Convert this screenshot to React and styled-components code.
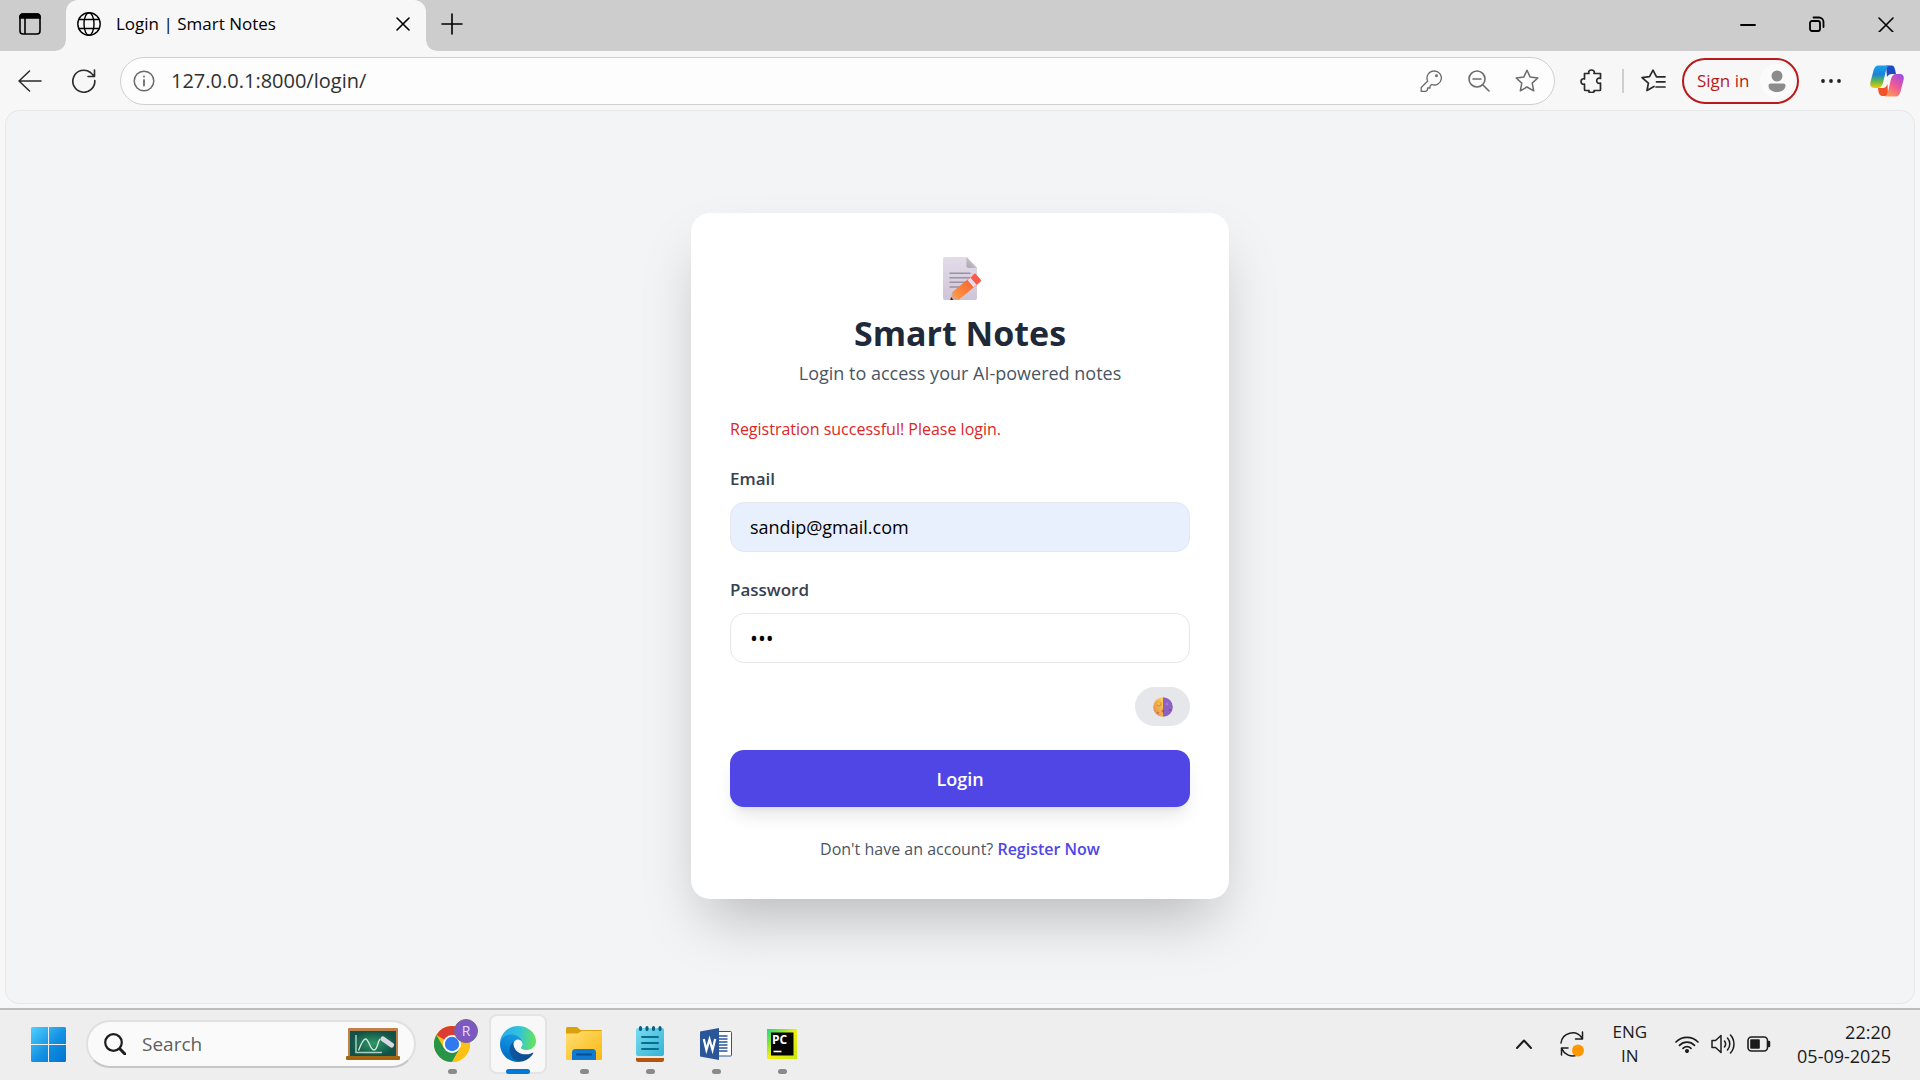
import React from "react";
import styled, { createGlobalStyle } from "styled-components";

const Global = createGlobalStyle`
  *, *::before, *::after { box-sizing: border-box; }
  body { margin: 0; background: #f7f7f7; }
  body, button, input { font-family: "Open Sans", "Noto Sans", sans-serif; }
  button { border: 0; padding: 0; background: none; color: inherit; cursor: pointer; }
  h1, p { margin: 0; }
  svg { display: block; flex: none; }
`;

const Screen = styled.div`
  display: flex;
  flex-direction: column;
  min-height: 100vh;
  background: #f7f7f7;
`;

/* Title bar */
const TabStrip = styled.header`
  display: flex;
  align-items: stretch;
  height: 51px;
  background: #cdcdcd;
  color: #000;
`;

const StripButton = styled.button`
  display: grid;
  place-items: center;
  width: ${(p) => p.$width}px;
  height: 48px;
`;

const Tab = styled.div`
  position: relative;
  display: flex;
  align-items: center;
  width: 360px;
  margin: 0 3px 0 6px;
  padding: 0 11px 3px 11px;
  gap: 15px;
  border-radius: 12px 12px 0 0;
  background: #f7f7f7;
  &::before, &::after {
    content: "";
    position: absolute;
    bottom: 0;
    width: 10px;
    height: 10px;
  }
  &::before {
    right: 100%;
    background: radial-gradient(circle at 0 0, #cdcdcd 9px, #f7f7f7 10px);
  }
  &::after {
    left: 100%;
    background: radial-gradient(circle at 100% 0, #cdcdcd 9px, #f7f7f7 10px);
  }
`;

const TabTitle = styled.span`
  flex: 1;
  font-size: 17px;
  line-height: 24px;
  white-space: nowrap;
`;

const WindowControls = styled.div`
  display: flex;
  margin-left: auto;
`;

/* Toolbar */
const Toolbar = styled.nav`
  display: flex;
  align-items: center;
  gap: 6px;
  padding: 6px 9px 5px 6px;
  color: #2a2a2a;
`;

const ToolButton = styled.button`
  display: grid;
  place-items: center;
  flex: none;
  width: ${(p) => p.$width || 48}px;
  height: 44px;
`;

const AddressBar = styled.label`
  display: flex;
  flex: 1;
  align-items: center;
  min-width: 0;
  height: 48px;
  margin: 0 7px 0 6px;
  padding: 0 3px 0 12px;
  border: 1px solid #cfcfcf;
  border-radius: 24px;
  background: #fdfdfd;
  color: #6b6b6b;
`;

const AddressInput = styled.input`
  flex: 1;
  min-width: 0;
  margin-left: 16px;
  padding: 0;
  border: 0;
  outline: 0;
  background: none;
  color: #303030;
  font-size: 20px;
  line-height: 28px;
`;

const Divider = styled.span`
  width: 2px;
  height: 24px;
  background: #cfcfcf;
`;

const SignIn = styled.button`
  display: flex;
  flex: none;
  align-items: center;
  justify-content: space-between;
  width: 117px;
  height: 46px;
  padding: 0 3px 0 13px;
  border: 2px solid #b8191b;
  border-radius: 23px;
  color: #b8191b;
  font-size: 17px;
  line-height: 24px;
  white-space: nowrap;
`;

/* Page */
const Page = styled.main`
  display: flex;
  flex: 1;
  align-items: center;
  justify-content: center;
  margin: 0 5px 4px;
  padding-bottom: 2px;
  overflow: hidden;
  border: 1px solid #e6e7e8;
  border-radius: 14px;
  background: #f3f4f6;
`;

const Card = styled.section`
  width: 100%;
  max-width: 538px;
  padding: 44px 39px 38px;
  border-radius: 19px;
  background: #fff;
  box-shadow: 0 30px 60px -14px rgba(0, 0, 0, 0.25);
`;

const CardHeader = styled.div`
  display: flex;
  flex-direction: column;
  align-items: center;
`;

const Title = styled.h1`
  margin: 10px 0 4px;
  color: #1f2937;
  font-size: 34px;
  font-weight: 700;
  line-height: 44px;
`;

const Subtitle = styled.p`
  color: #4b5563;
  font-size: 18px;
  line-height: 28px;
`;

const Message = styled.p`
  margin: 30px 0 24px;
  color: #dc2626;
  font-size: 16px;
  line-height: 24px;
`;

const Form = styled.form`
  display: flex;
  flex-direction: column;
  gap: 24px;
`;

const Field = styled.div`
  display: flex;
  flex-direction: column;
  gap: 9px;
`;

const FieldLabel = styled.label`
  color: #374151;
  font-size: 17px;
  font-weight: 600;
  line-height: 28px;
`;

const TextInput = styled.input`
  width: 100%;
  height: 50px;
  padding: 0 19px;
  border: 1px solid #e5e7eb;
  border-radius: 14px;
  outline: 0;
  background: ${(p) => (p.$filled ? "#e8f0fe" : "#fff")};
  color: #000;
  font-size: ${(p) => (p.type === "password" ? 21 : 18)}px;
`;

const ThemeToggle = styled.button`
  display: grid;
  place-items: center;
  align-self: flex-end;
  width: 55px;
  height: 39px;
  border-radius: 20px;
  background: #e5e7eb;
`;

const LoginButton = styled.button`
  height: 57px;
  border-radius: 14px;
  background: #4f46e5;
  box-shadow: 0 12px 18px -4px rgba(0, 0, 0, 0.1), 0 5px 7px -5px rgba(0, 0, 0, 0.1);
  color: #fff;
  font-size: 18px;
  font-weight: 600;
`;

const Footer = styled.p`
  margin-top: 30px;
  color: #4b5563;
  font-size: 16px;
  line-height: 24px;
  text-align: center;
  a {
    color: #4f46e5;
    font-weight: 600;
    text-decoration: none;
  }
`;

/* Taskbar */
const Taskbar = styled.footer`
  display: flex;
  align-items: center;
  height: 72px;
  padding: 0 29px 2px 23px;
  border-top: 2px solid #bcbcbc;
  background: #eeeeee;
  color: #1c1c1c;
`;

const StartButton = styled.button`
  display: grid;
  place-items: center;
  width: 50px;
  height: 50px;
`;

const SearchBox = styled.label`
  display: flex;
  align-items: center;
  gap: 16px;
  width: 330px;
  height: 48px;
  margin: 0 7px 0 13px;
  padding: 0 14px 0 16px;
  border: 2px solid #e0e0e0;
  border-bottom-color: #c6c6c6;
  border-radius: 24px;
  background: #fafafa;
`;

const SearchInput = styled.input`
  flex: 1;
  min-width: 0;
  padding: 0;
  border: 0;
  outline: 0;
  background: none;
  font-size: 19px;
  line-height: 28px;
  &::placeholder { color: #5f5f5f; opacity: 1; }
`;

const Apps = styled.div`
  display: flex;
  gap: 8px;
`;

const AppButton = styled.button`
  position: relative;
  display: grid;
  place-items: center;
  width: 58px;
  height: 60px;
  border: 2px solid ${(p) => (p.$active ? "#e4e4e4" : "transparent")};
  border-radius: 8px;
  background: ${(p) => (p.$active ? "#f8f8f8" : "transparent")};
  &::after {
    content: "";
    position: absolute;
    bottom: -2px;
    width: ${(p) => (p.$active ? 24 : 9)}px;
    height: 5px;
    border-radius: 3px;
    background: ${(p) => (p.$active ? "#0078d7" : "#8a8a8a")};
  }
`;

const Badge = styled.span`
  position: absolute;
  top: 3px;
  right: 1px;
  width: 24px;
  height: 24px;
  border: 1px solid #6d6d86;
  border-radius: 50%;
  background: #7e57c2;
  color: #e8e0f4;
  font-size: 14px;
  line-height: 22px;
  text-align: center;
`;

const Tray = styled.div`
  display: flex;
  align-items: center;
  margin-left: auto;
`;

const TrayButton = styled.button`
  display: flex;
  align-items: center;
  justify-content: center;
  gap: 12px;
  height: 50px;
  padding: 0 ${(p) => p.$pad}px;
`;

const TrayText = styled.span`
  display: flex;
  flex-direction: column;
  align-items: ${(p) => p.$align};
  font-size: ${(p) => p.$size}px;
  line-height: 24px;
  white-space: nowrap;
`;

const TrayStatus = styled(TrayButton)`
  margin-right: 12px;
`;

function Line({ w = 24, h = w, box, sw = 1.5, children }) {
  return (
    <svg width={w} height={h} viewBox={box || `0 0 ${w} ${h}`} fill="none" stroke="currentColor"
      strokeWidth={sw} strokeLinecap="round" strokeLinejoin="round" aria-hidden="true">
      {children}
    </svg>
  );
}

const STAR = "M12 1.2l3.2 6.9 7.6.9-5.6 5.1 1.5 7.7L12 18l-6.7 3.8 1.5-7.7L1.2 9l7.6-.9z";

function NoteIcon() {
  return (
    <svg width="44" height="44" viewBox="0 0 44 44" aria-hidden="true">
      <defs>
        <linearGradient id="paper" x1="0" y1="0" x2="0" y2="1">
          <stop offset="0" stopColor="#e3dce8" /><stop offset="1" stopColor="#cfc4d8" />
        </linearGradient>
        <linearGradient id="fold" x1="0" y1="1" x2="1" y2="0">
          <stop offset="0" stopColor="#aaa3ae" /><stop offset="1" stopColor="#dcd5df" />
        </linearGradient>
        <linearGradient id="pencil" x1="0" y1="1" x2="1" y2="0">
          <stop offset="0" stopColor="#ffa044" /><stop offset="1" stopColor="#f3582f" />
        </linearGradient>
      </defs>
      <path d="M7 0h21.500l10.500 11v30a2 2 0 0 1-2 2H7a2 2 0 0 1-2-2V2a2 2 0 0 1 2-2z" fill="url(#paper)" />
      <path d="M28.500 0v9a2 2 0 0 0 2 2H39z" fill="url(#fold)" />
      <path d="M12 16.200h20M12 20.800h20M12 25.300h16M12 29.900h10" stroke="#9a91a1" strokeWidth="1.500" strokeLinecap="round" />
      <path d="M14.500 35L32 20.500l6.500 7.500L20.500 43H16z" fill="url(#pencil)" />
      <path d="M14.500 35l6 8h-8z" fill="#e3a183" />
      <path d="M13.200 40l2 3h-3z" fill="#3b2532" />
      <path d="M29.500 23l4-3.300 6 7.200-4 3.400z" fill="#e6dbeb" />
      <path d="M32.500 20.700l3.300-3.500a1.500 1.500 0 0 1 2.200 0l4.600 5.400a1.500 1.500 0 0 1-.2 2.200l-3.600 3.200z" fill="#fb5a4b" />
    </svg>
  );
}

function MoonIcon() {
  return (
    <svg width="20" height="20" viewBox="0 0 20 20" aria-hidden="true">
      <defs>
        <linearGradient id="lit" x1="1" y1="0" x2="0" y2="1">
          <stop offset="0" stopColor="#ffd05a" /><stop offset=".65" stopColor="#eda24b" /><stop offset="1" stopColor="#c77561" />
        </linearGradient>
      </defs>
      <path d="M10 .2a9.800 9.800 0 0 0 0 19.600z" fill="url(#lit)" />
      <path d="M10 .2a9.800 9.800 0 0 1 0 19.600z" fill="#8d60c2" />
      <circle cx="6" cy="7" r="2.500" fill="#d6923f" /><circle cx="5.800" cy="6.500" r="1.700" fill="#f5ba55" />
      <circle cx="5" cy="15.800" r="1.100" fill="#c87850" /><path d="M8.500 14a1.500 1.500 0 0 1 1.500-1.500v3A1.500 1.500 0 0 1 8.500 14z" fill="#bd7940" />
      <circle cx="14" cy="7" r="1.500" fill="#a37bd2" /><circle cx="17" cy="13" r="1" fill="#6f48a4" /><path d="M10 12.500a1.700 1.700 0 0 1 0 3z" fill="#6f48a4" />
    </svg>
  );
}

function CopilotIcon() {
  return (
    <svg width="34" height="32" viewBox="0 0 34 32" aria-hidden="true">
      <defs>
        <linearGradient id="cpA" x1="0" y1="0" x2="0" y2="1">
          <stop offset="0" stopColor="#1ba0ea" /><stop offset=".4" stopColor="#1b83d8" /><stop offset=".7" stopColor="#63b946" /><stop offset="1" stopColor="#f6c90d" />
        </linearGradient>
        <linearGradient id="cpB" x1=".8" y1="0" x2=".2" y2="1">
          <stop offset="0" stopColor="#a24be8" /><stop offset=".5" stopColor="#ee5a94" /><stop offset="1" stopColor="#ff9b51" />
        </linearGradient>
      </defs>
      <path d="M16 .5h5c3.200 0 3.400 1.800 4.100 4.300L26 9h-4c-2.500 0-4 1-5 3z" fill="#1d4bc4" />
      <path d="M8 23h5c2 0 3.500-1.500 4.500-4l.5 12h-5c-3 0-4-1.800-4.400-4z" fill="#f1532b" />
      <path d="M8.500.500h11c-2 .8-2.800 2.500-3.400 4.500L13 18c-.8 3-2.500 5-5 5H4c-3.500 0-4.400-3-3.500-6l3-11.500C4.400 2.500 5.500.500 8.500.500z" fill="url(#cpA)" />
      <path d="M25.500 31.500h-11c2-.8 2.800-2.500 3.400-4.500L21 14c.8-3 2.500-5 5-5h4c3.500 0 4.400 3 3.500 6l-3 11.500c-.9 3-2 5-5 5z" fill="url(#cpB)" />
    </svg>
  );
}

function WindowsIcon() {
  return (
    <svg width="35" height="35" viewBox="0 0 35 35" aria-hidden="true">
      <defs>
        <linearGradient id="win" gradientUnits="userSpaceOnUse" x1="0" y1="0" x2="35" y2="35">
          <stop offset="0" stopColor="#4fd0ff" /><stop offset=".55" stopColor="#1390e2" /><stop offset="1" stopColor="#0073d1" />
        </linearGradient>
      </defs>
      <path fill="url(#win)" d="M1.500 0H17v17H0V1.500A1.500 1.500 0 0 1 1.500 0zM18 0h15.500A1.500 1.500 0 0 1 35 1.500V17H18zM0 18h17v17H1.500A1.500 1.500 0 0 1 0 33.500zM18 18h17v15.500a1.500 1.500 0 0 1-1.500 1.500H18z" />
    </svg>
  );
}

function BoardIcon() {
  return (
    <svg width="54" height="32" viewBox="0 0 54 32" aria-hidden="true">
      <defs>
        <radialGradient id="board"><stop offset="0" stopColor="#2f9a66" /><stop offset="1" stopColor="#125148" /></radialGradient>
      </defs>
      <rect x="2" y="0" width="50" height="29" rx="1" fill="#c0804c" />
      <rect x="4" y="3" width="46" height="25" fill="url(#board)" />
      <path d="M10 7v17.500h26" fill="none" stroke="#a9d0bc" strokeWidth="1.500" />
      <path d="M12.500 22.500C15 16 17 11 19.500 11c3.500 0 4.500 11 8.500 11 3.500 0 3.500-8 6-11" fill="none" stroke="#d6e9df" strokeWidth="1.300" />
      <path d="M37 11l8.500 6" stroke="#d9d7e4" strokeWidth="5" strokeLinecap="round" />
      <rect x="0" y="28" width="54" height="4" rx="1" fill="#a1660f" />
    </svg>
  );
}

function ChromeIcon() {
  return (
    <svg width="36" height="36" viewBox="0 0 36 36" aria-hidden="true">
      <circle cx="18" cy="18" r="18" fill="#fbc116" />
      <path d="M18 18L2.400 9A18 18 0 0 1 33.600 9H18z" fill="#dd3c33" />
      <path d="M2.400 9A18 18 0 0 0 18 36l7.800-13.500L18 18l-7.800 4.500z" fill="#279447" />
      <path d="M18 36a18 18 0 0 0 15.600-27H18l7.800 13.500z" fill="#fbc116" />
      <circle cx="18" cy="18" r="9" fill="#fff" /><circle cx="18" cy="18" r="7.200" fill="#3079ee" />
    </svg>
  );
}

function EdgeIcon() {
  return (
    <svg width="36" height="36" viewBox="0 0 256 256" aria-hidden="true">
      <defs>
        <linearGradient id="eA" x1="0" y1="0" x2="1" y2="0"><stop offset="0" stopColor="#0c59a4" /><stop offset="1" stopColor="#114a8b" /></linearGradient>
        <linearGradient id="eB" x1=".6" y1="0" x2=".3" y2="1"><stop offset="0" stopColor="#1b9de2" /><stop offset=".5" stopColor="#0a84d8" /><stop offset="1" stopColor="#0067b8" /></linearGradient>
        <linearGradient id="eC" x1="0" y1=".3" x2="1" y2=".4"><stop offset="0" stopColor="#2aa9e8" /><stop offset=".5" stopColor="#2fc2df" /><stop offset="1" stopColor="#66e35c" /></linearGradient>
      </defs>
      <path d="M231 190.500c-3.400 1.800-6.900 3.400-10.500 4.700a102 102 0 0 1-35.900 6.500c-47.300 0-88.500-32.500-88.500-74.300.1-11.400 6.400-21.900 16.400-27.300-42.800 1.800-53.800 46.400-53.800 72.500 0 73.900 68.100 81.400 82.800 81.400 7.900 0 19.800-2.300 27-4.600l1.300-.4a128 128 0 0 0 66.600-52.800c1.200-1.900.6-4.300-1.200-5.500-1.300-.8-2.900-.9-4.200-.2z" fill="url(#eA)" />
      <path d="M105.700 241.400a79 79 0 0 1-22.700-21.300 80.700 80.700 0 0 1 29.500-120c3.200-1.500 8.500-4.100 15.600-4a32.400 32.400 0 0 1 25.700 13 31.900 31.900 0 0 1 6.300 18.700c0-.2 24.500-79.600-80-79.600-43.900 0-80 41.700-80 78.200-.2 19.300 4 38.500 12.100 56a128 128 0 0 0 156.400 67 75.500 75.500 0 0 1-62.800-8z" fill="url(#eB)" />
      <path d="M152.300 148.900c-.9 1-3.400 2.500-3.400 5.600 0 2.600 1.700 5.200 4.800 7.300 14.300 10 41.400 8.600 41.500 8.600 10.700 0 21.100-2.900 30.300-8.300A61.400 61.400 0 0 0 256 109c.3-22.400-8-37.300-11.300-43.900C223.500 23.900 177.700 0 128 0 58 0 1 56.200 0 126.200c.5-36.500 36.800-66 80-66 3.500 0 23.500.3 42 10 16.300 8.600 24.900 18.900 30.800 29.200 6.200 10.700 7.300 24.100 7.300 29.500s-2.700 13.300-7.800 20z" fill="url(#eC)" />
    </svg>
  );
}

function FolderIcon() {
  return (
    <svg width="36" height="34" viewBox="0 0 36 34" aria-hidden="true">
      <defs>
        <linearGradient id="fd" x1="0" y1="0" x2="1" y2="1"><stop offset="0" stopColor="#ffdf74" /><stop offset="1" stopColor="#fab80f" /></linearGradient>
      </defs>
      <path d="M1.500 0H11l3.500 3H35a1 1 0 0 1 1 1v10H0V1.500A1.500 1.500 0 0 1 1.500 0z" fill="#dba10b" />
      <path d="M0 6.500h11.500L16 4h20v27.500a1.500 1.500 0 0 1-1.500 1.500h-33A1.500 1.500 0 0 1 0 31.500z" fill="url(#fd)" />
      <path d="M6 33v-7.500A3.500 3.500 0 0 1 9.500 22h17a3.500 3.500 0 0 1 3.500 3.500V33z" fill="#1279d0" />
      <path d="M11 27.500h14" stroke="#0b4d91" strokeWidth="2" strokeLinecap="round" />
    </svg>
  );
}

function NotepadIcon() {
  return (
    <svg width="28" height="36" viewBox="0 0 28 36" aria-hidden="true">
      <defs>
        <linearGradient id="np" x1="0" y1="0" x2="1" y2="1"><stop offset="0" stopColor="#78dcf2" /><stop offset="1" stopColor="#35b3d2" /></linearGradient>
      </defs>
      <rect x="0" y="24" width="28" height="12" rx="2" fill="#b4550f" />
      <rect x="0" y="28" width="28" height="4" fill="#f0e8e3" />
      <rect x="0" y="2" width="28" height="28" rx="2" fill="url(#np)" />
      <path d="M4.500 1.500v2M11 1.500v2M17.500 1.500v2M24 1.500v2" stroke="#0b5d7c" strokeWidth="3" strokeLinecap="round" />
      <path d="M6 11h16M6 17h16M6 23h16" stroke="#086c8d" strokeWidth="2" strokeLinecap="round" />
    </svg>
  );
}

function WordIcon() {
  return (
    <svg width="32" height="32" viewBox="0 0 32 32" aria-hidden="true">
      <rect x="16" y="3.500" width="15.500" height="24.500" rx="1" fill="#fff" stroke="#2a5699" />
      <path d="M19 8h8.500M19 11h8.500M19 14h8.500M19 17h8.500M19 20h8.500M19 23h8.500" stroke="#2a5699" strokeWidth="1.300" />
      <path d="M0 3.500L19 0v32L0 28.500z" fill="#2a5699" />
      <path d="M3.800 11l2.600 11L9.500 11.500 12.500 22l2.700-11" fill="none" stroke="#fff" strokeWidth="2.200" />
    </svg>
  );
}

function PyCharmIcon() {
  return (
    <svg width="30" height="30" viewBox="0 0 30 30" aria-hidden="true">
      <defs>
        <linearGradient id="pc" x1="0" y1="0" x2="1" y2="1"><stop offset="0" stopColor="#21d789" /><stop offset=".25" stopColor="#7be53c" /><stop offset=".5" stopColor="#f3ee12" /><stop offset="1" stopColor="#c9e80f" /></linearGradient>
      </defs>
      <rect width="30" height="30" fill="url(#pc)" /><rect x="4" y="3.500" width="22.500" height="23" fill="#050505" />
      <text x="5" y="15" fill="#fff" fontFamily="Open Sans, sans-serif" fontWeight="700" fontSize="12">PC</text>
      <path d="M6.500 22.500h8" stroke="#fff" strokeWidth="1.600" />
    </svg>
  );
}

export default function App() {
  return (
    <Screen>
      <Global />
      <TabStrip>
        <StripButton $width={60} aria-label="Tab actions">
          <svg width="22" height="22" viewBox="0 0 22 22" fill="none" stroke="#000" strokeWidth="1.600" aria-hidden="true">
            <rect x="1" y="1" width="20" height="20" rx="3" /><path d="M1 5V4a3 3 0 0 1 3-3h14a3 3 0 0 1 3 3v1z" fill="#000" /><path d="M6 5v16" />
          </svg>
        </StripButton>
        <Tab>
          <Line w={24} sw={1.4}>
            <circle cx="12" cy="12" r="11.200" /><ellipse cx="12" cy="12" rx="5" ry="11.200" /><path d="M2 7.500h20M2 16.500h20" />
          </Line>
          <TabTitle>Login | Smart Notes</TabTitle>
          <StripButton $width={24} aria-label="Close tab">
            <Line w={14} sw={1.6}><path d="M1 1l12 12M13 1L1 13" /></Line>
          </StripButton>
        </Tab>
        <StripButton $width={46} aria-label="New tab">
          <Line w={22} sw={1.6}><path d="M11 1v20M1 11h20" /></Line>
        </StripButton>
        <WindowControls>
          <StripButton $width={69} aria-label="Minimize"><Line w={16} sw={1.8}><path d="M1 9h14" /></Line></StripButton>
          <StripButton $width={69} aria-label="Restore">
            <Line w={16} sw={1.8}><rect x="1" y="5" width="10" height="10" rx="2" /><path d="M4.500 1.500H10A4.500 4.500 0 0 1 14.500 6v5" /></Line>
          </StripButton>
          <StripButton $width={69} aria-label="Close"><Line w={16} sw={1.6}><path d="M1 2l14 14M15 2L1 16" /></Line></StripButton>
        </WindowControls>
      </TabStrip>

      <Toolbar>
        <ToolButton aria-label="Back"><Line w={24}><path d="M23 12H1M11.500 2L1 12l10.500 10" /></Line></ToolButton>
        <ToolButton aria-label="Reload"><Line w={24} sw={1.6}><path d="M22.800 11.500A11 11 0 1 1 18.500 3.500L22 7M22.500 1v6.500H16" /></Line></ToolButton>
        <AddressBar>
          <Line w={22} box="0 0 22 22"><circle cx="11" cy="11" r="9.800" /><path d="M11 10v5.500M11 6.500v.2" strokeWidth="1.800" /></Line>
          <AddressInput aria-label="Address" defaultValue="127.0.0.1:8000/login/" />
          <ToolButton type="button" aria-label="Saved passwords">
            <Line w={22} sw={1.3}><path d="M14 1a7 7 0 1 1-2.200 13.500L10 16v2H7.500v2L5.500 21.500H1.200V17.500l6.500-6.500A7 7 0 0 1 14 1z" /><circle cx="16.500" cy="5.700" r=".8" fill="currentColor" /></Line>
          </ToolButton>
          <ToolButton type="button" aria-label="Zoom"><Line w={22} sw={1.6}><circle cx="9" cy="9" r="8" /><path d="M15 15l6 6M5 9h8" /></Line></ToolButton>
          <ToolButton type="button" aria-label="Add to favorites"><Line w={24}><path d={STAR} /></Line></ToolButton>
        </AddressBar>
        <ToolButton aria-label="Extensions">
          <Line w={24} sw={1.7}><path d="M4.500 4.500H9C8 2.500 9.500 1 11.500 1S15 2.500 14 4.500h6.500V9.500c-2-.8-3.800.2-3.800 2.300s1.800 3.100 3.800 2.300v6.400a1 1 0 0 1-1 1H14c.8 1.200-.5 2-2.500 2S8 22.700 9 21.500H5.500a1 1 0 0 1-1-1V15C2.500 15.800 1 14.500 1 12.500S2.500 9.200 4.500 10z" /></Line>
        </ToolButton>
        <Divider />
        <ToolButton $width={46} aria-label="Favorites">
          <Line w={25} h={24} sw={1.7}><path d="M13 17.500l-7 4 1.400-7.300L1 8.600l7.500-1L12 1.200l3.500 6.600H24M15.500 12.800H24M15 18h9" /></Line>
        </ToolButton>
        <SignIn>
          Sign in
          <svg width="34" height="34" viewBox="0 0 34 34" aria-hidden="true">
            <circle cx="17" cy="17" r="17" fill="#fbfbfb" /><circle cx="17" cy="12" r="5.500" fill="#8c8c8c" />
            <path d="M10.500 19.500h13a2 2 0 0 1 2 2c0 4-3.500 6.500-8.500 6.500s-8.500-2.500-8.500-6.500a2 2 0 0 1 2-2z" fill="#8c8c8c" />
          </svg>
        </SignIn>
        <ToolButton $width={52} aria-label="Settings and more">
          <svg width="20" height="6" viewBox="0 0 20 6" fill="#222" aria-hidden="true"><circle cx="2" cy="3" r="1.900" /><circle cx="10" cy="3" r="1.900" /><circle cx="18" cy="3" r="1.900" /></svg>
        </ToolButton>
        <ToolButton aria-label="Copilot"><CopilotIcon /></ToolButton>
      </Toolbar>

      <Page>
        <Card>
          <CardHeader>
            <NoteIcon />
            <Title>Smart Notes</Title>
            <Subtitle>Login to access your AI-powered notes</Subtitle>
          </CardHeader>
          <Message role="status">Registration successful! Please login.</Message>
          <Form onSubmit={(e) => e.preventDefault()}>
            <Field>
              <FieldLabel htmlFor="email">Email</FieldLabel>
              <TextInput id="email" type="email" $filled defaultValue="sandip@gmail.com" />
            </Field>
            <Field>
              <FieldLabel htmlFor="password">Password</FieldLabel>
              <TextInput id="password" type="password" defaultValue="123" />
            </Field>
            <ThemeToggle type="button" aria-label="Toggle theme"><MoonIcon /></ThemeToggle>
            <LoginButton type="submit">Login</LoginButton>
          </Form>
          <Footer>Don't have an account? <a href="#register">Register Now</a></Footer>
        </Card>
      </Page>

      <Taskbar>
        <StartButton aria-label="Start"><WindowsIcon /></StartButton>
        <SearchBox>
          <Line w={22} sw={2.2}><circle cx="9.500" cy="9.500" r="8.300" /><path d="M16 16l5 5" strokeWidth="3" /></Line>
          <SearchInput aria-label="Search" placeholder="Search" />
          <BoardIcon />
        </SearchBox>
        <Apps>
          <AppButton aria-label="Chrome"><ChromeIcon /><Badge>R</Badge></AppButton>
          <AppButton $active aria-label="Edge"><EdgeIcon /></AppButton>
          <AppButton aria-label="File Explorer"><FolderIcon /></AppButton>
          <AppButton aria-label="Notepad"><NotepadIcon /></AppButton>
          <AppButton aria-label="Word"><WordIcon /></AppButton>
          <AppButton aria-label="PyCharm"><PyCharmIcon /></AppButton>
        </Apps>
        <Tray>
          <TrayButton $pad={14} aria-label="Show hidden icons"><Line w={16} h={10} sw={2}><path d="M1 9l7-7.500L15 9" /></Line></TrayButton>
          <TrayButton $pad={14} aria-label="Update">
            <Line w={24} h={26}>
              <path d="M1 12A11.500 11.500 0 0 1 22 7M22.500 1v7H15.500M17 24A11.500 11.500 0 0 1 2 18M1.500 24v-7H8" />
              <circle cx="18" cy="19.500" r="6" fill="#ff9800" stroke="none" />
            </Line>
          </TrayButton>
          <TrayButton $pad={14} aria-label="Keyboard language"><TrayText $align="center" $size={17}><span>ENG</span><span>IN</span></TrayText></TrayButton>
          <TrayStatus $pad={14} aria-label="Network, volume and battery">
            <Line w={24} h={18} sw={1.7}>
              <path d="M1 7a15.500 15.500 0 0 1 22 0M4.500 10.300a10.600 10.600 0 0 1 15 0M8 13.300a5.700 5.700 0 0 1 8 0" /><circle cx="12" cy="16" r="1.200" fill="currentColor" />
            </Line>
            <Line w={24} h={20}>
              <path d="M1 6.500h3.500L10 1.500v17l-5.500-5H1zM13.500 7a5 5 0 0 1 0 6M16.500 4a9 9 0 0 1 0 12M19.500 1a13.500 13.500 0 0 1 0 18" />
            </Line>
            <Line w={24} h={16} sw={1.6}>
              <rect x="1" y="1" width="19.500" height="14" rx="3.500" /><rect x="4" y="4" width="8" height="8" fill="currentColor" /><path d="M22 6v4" strokeWidth="2.500" />
            </Line>
          </TrayStatus>
          <TrayButton $pad={0} aria-label="Clock"><TrayText $align="flex-end" $size={18}><span>22:20</span><span>05-09-2025</span></TrayText></TrayButton>
        </Tray>
      </Taskbar>
    </Screen>
  );
}
